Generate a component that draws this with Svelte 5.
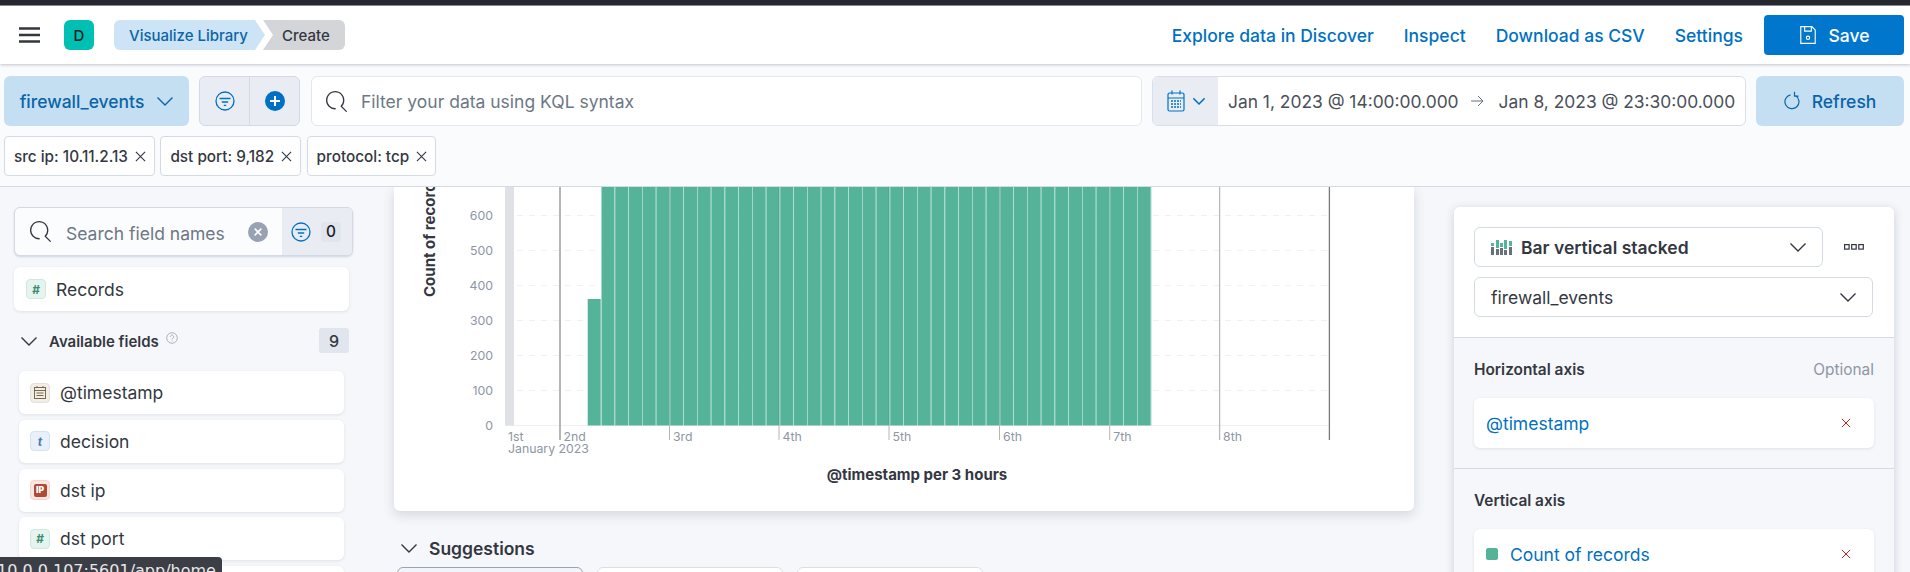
<script>
	const filters = ['src ip: 10.11.2.13', 'dst port: 9,182', 'protocol: tcp'];
	const fields = [
		{ name: '@timestamp', kind: 'date' },
		{ name: 'decision', kind: 'text' },
		{ name: 'dst ip', kind: 'ip' },
		{ name: 'dst port', kind: 'num' },
		{ name: 'protocol', kind: 'text' }
	];

	// chart coordinates are local to the card, which starts at x 394, y 187 and is scrolled
	const originX = 111; // plot left
	const dayWidth = 110;
	const baseY = 238.5;
	const yTicks = [0, 100, 200, 300, 400, 500, 600];
	const days = [
		{ label: '2nd', x: 166 },
		{ label: '3rd', x: 275.5 },
		{ label: '4th', x: 385 },
		{ label: '5th', x: 495 },
		{ label: '6th', x: 605.5 },
		{ label: '7th', x: 715.7 },
		{ label: '8th', x: 825.6 }
	];
	const bars = Array.from({ length: 40 }, (_, i) => 207.5 + (i * dayWidth) / 8);
	const gridLines = yTicks.slice(1).map((t) => baseY - (t / 100) * 35);
</script>

{#snippet chevron(size = 16)}
	<svg class="chev" width={size} height={size} viewBox="0 0 16 16" aria-hidden="true">
		<path d="M.5 4.5L8 12l7.5-7.5" fill="none" stroke="currentColor" stroke-width="1.4" />
	</svg>
{/snippet}

{#snippet cross(size = 12)}
	<svg width={size} height={size} viewBox="0 0 12 12" aria-hidden="true">
		<path d="M1 1l10 10M11 1L1 11" fill="none" stroke="currentColor" stroke-width="1.2" />
	</svg>
{/snippet}

{#snippet funnel(size = 20)}
	<svg width={size} height={size} viewBox="0 0 20 20" aria-hidden="true" fill="none" stroke="currentColor" stroke-width="1.3">
		<circle cx="10" cy="10" r="9" />
		<path d="M4.5 7.5h11M6.8 11h6.4M8.8 14.3h2.4" />
	</svg>
{/snippet}

{#snippet searchIcon()}
	<svg width="21" height="21" viewBox="0 0 16 16" aria-hidden="true">
		<path fill="#343741" d="M11.3 12l3.85 3.85a.5.5 0 00.7-.7l-3.56-3.57c2.38-2.74 2.27-6.92-.34-9.53-2.73-2.73-7.17-2.73-9.9 0-2.73 2.73-2.73 7.17 0 9.9A6.96 6.96 0 007 14a.5.5 0 000-1 5.96 5.96 0 01-4.24-1.76 6 6 0 010-8.48c2.34-2.34 6.14-2.34 8.48 0a6 6 0 010 8.48.5.5 0 00.06.76z" />
	</svg>
{/snippet}

<div class="page">
	<div class="chrome"></div>

	<header class="topnav">
		<button class="burger" aria-label="Menu">
			<svg width="21" height="16" viewBox="0 0 21 16" aria-hidden="true">
				<path d="M0 1.5h21M0 8h21M0 14.5h21" stroke="#343741" stroke-width="2.4" />
			</svg>
		</button>
		<span class="space-badge">D</span>
		<nav class="crumbs">
			<span class="crumb first">Visualize Library</span>
			<span class="crumb last">Create</span>
		</nav>
		<div class="links">
			<span>Explore data in Discover</span>
			<span>Inspect</span>
			<span>Download as CSV</span>
			<span>Settings</span>
		</div>
		<button class="save">
			<svg width="18" height="20" viewBox="0 0 16 18" aria-hidden="true" fill="none" stroke="#fff" stroke-width="1">
				<path d="M1.5 1.5h10l3 3v12h-13z" />
				<path d="M5 1.500v4h6v-4" />
				<circle cx="8" cy="11.500" r="1.500" />
			</svg>
			Save
		</button>
	</header>

	<section class="querybar">
		<div class="row">
			<button class="dataview">firewall_events {@render chevron(16)}</button>
			<div class="filter-group">
				<span class="fg-cell">{@render funnel(20)}</span>
				<span class="fg-cell">
					<svg width="20" height="20" viewBox="0 0 20 20" aria-hidden="true">
						<circle cx="10" cy="10" r="10" fill="#0071c2" />
						<path d="M10 5v10M5 10h10" stroke="#fff" stroke-width="2" />
					</svg>
				</span>
			</div>
			<div class="kql">
				{@render searchIcon()}
				<span>Filter your data using KQL syntax</span>
			</div>
			<div class="datepicker">
				<span class="dp-prepend">
					<svg width="18" height="22" viewBox="0 0 18 22" aria-hidden="true" fill="none" stroke="#0071c2" stroke-width="1.2">
						<rect x="1" y="3" width="16" height="18" rx="1.500" />
						<path d="M1 8h16M5 0.500v4M13 0.500v4" />
						<path d="M4 11h10M4 14h10M4 17h10" stroke-dasharray="2 1" stroke-width="1.600" />
					</svg>
					{@render chevron(12)}
				</span>
				<span class="dp-text">Jan 1, 2023 @ 14:00:00.000</span>
				<svg class="dp-arrow" width="14" height="14" viewBox="0 0 14 14" aria-hidden="true">
					<path d="M1 7h12M8 2l5 5-5 5" fill="none" stroke="#69707d" stroke-width="1" />
				</svg>
				<span class="dp-text">Jan 8, 2023 @ 23:30:00.000</span>
			</div>
			<button class="refresh">
				<svg width="16" height="20" viewBox="0 0 16 20" aria-hidden="true" fill="none" stroke="#0b64a8" stroke-width="1.200">
					<path d="M11.500 4.600a7 7 0 1 1-5-0.800M10.500 0.800v4.400h4" />
				</svg>
				Refresh
			</button>
		</div>
		<div class="row pills">
			{#each filters as f}
				<span class="pill">{f} <span class="pill-x">{@render cross(11)}</span></span>
			{/each}
		</div>
	</section>

	<div class="workspace">
		<aside class="sidebar">
			<div class="fieldsearch">
				<div class="fs-input">
					{@render searchIcon()}
					<span class="fs-placeholder">Search field names</span>
					<span class="fs-clear">
						<svg width="10" height="10" viewBox="0 0 12 12" aria-hidden="true">
							<path d="M2 2l8 8M10 2l-8 8" stroke="#fff" stroke-width="2" />
						</svg>
					</span>
				</div>
				<div class="fs-filter">
					<span class="fs-funnel">{@render funnel(20)}</span>
					<span class="fs-count">0</span>
				</div>
			</div>

			<div class="records">
				<span class="ftoken num">#</span>
				Records
			</div>

			<div class="avail">
				{@render chevron(16)}
				<strong>Available fields</strong>
				<svg class="help" width="12" height="12" viewBox="0 0 12 12" aria-hidden="true" fill="none" stroke="#98a2b3" stroke-width="0.800">
					<circle cx="6" cy="6" r="5.300" />
					<path d="M4.300 4.800a1.700 1.700 0 1 1 2.600 1.500c-.6.300-.9.600-.9 1.200M6 8.600v.8" />
				</svg>
				<span class="avail-count">9</span>
			</div>

			<ul class="fieldlist">
				{#each fields as field}
					<li>
						{#if field.kind === 'date'}
							<span class="ftoken date">
								<svg width="12" height="13" viewBox="0 0 12 13" aria-hidden="true" fill="none" stroke="#7a6a4d" stroke-width="1">
									<rect x="0.500" y="1.500" width="11" height="11" />
									<path d="M0.500 4.500h11M3 0v2M9 0v2M2.500 7h7M2.500 9.500h7" />
								</svg>
							</span>
						{:else if field.kind === 'text'}
							<span class="ftoken text">t</span>
						{:else if field.kind === 'ip'}
							<span class="ftoken ip"><b>IP</b></span>
						{:else}
							<span class="ftoken num">#</span>
						{/if}
						{field.name}
					</li>
				{/each}
			</ul>
		</aside>

		<main class="center">
			<div class="chartcard">
				<svg class="chart" width="1020" height="324" viewBox="0 0 1020 324" role="img" aria-label="Count of records per 3 hours">
					<text class="axis-title" transform="translate(41 110) rotate(-90)">Count of records</text>

					{#each yTicks as t}
						<text class="tick" x="99" y={baseY - (t / 100) * 35 + 4.500} text-anchor="end">{t}</text>
					{/each}

					{#each gridLines as y}
						<line x1={originX} x2="935" y1={y} y2={y} stroke="#f0f1f4" stroke-dasharray="6 6" />
					{/each}
					<line x1={originX} x2="935" y1={baseY} y2={baseY} stroke="#eef0f3" />

					<rect x={originX} y="0" width="9" height={baseY} fill="#dfe1e6" />
					<rect x="193.700" y="112" width="13" height={baseY - 112} fill="#54b399" />
					{#each bars as x}
						<rect x={x} y="0" width="13" height={baseY} fill="#54b399" />
						<rect x={x + 13} y="0" width="0.750" height={baseY} fill="#a5d8c9" />
					{/each}

					<line x1="166" x2="166" y1="0" y2="253" stroke="#b5b5b5" stroke-width="2" />
					{#each days.slice(1, 6) as d}
						<line x1={d.x} x2={d.x} y1="0" y2={baseY} stroke="#000" stroke-opacity="0.120" />
					{/each}
					{#each days.slice(1, 6) as d}
						<line x1={d.x} x2={d.x} y1={baseY} y2="253" stroke="#b5b5b5" />
					{/each}
					<line x1="825.600" x2="825.600" y1="0" y2="253" stroke="#b8b8b8" stroke-width="1.300" />
					<line x1="935.400" x2="935.400" y1="0" y2="253" stroke="#7a7a7a" stroke-width="1.300" />

					<text class="tick" x="114" y="253.500">1st</text>
					{#each days as d}
						<text class="tick" x={d.x + 3.500} y="253.500">{d.label}</text>
					{/each}
					<text class="tick" x="114" y="266">January 2023</text>

					<text class="axis-title" x="523" y="293" text-anchor="middle">@timestamp per 3 hours</text>
				</svg>
			</div>

			<div class="suggest-head">
				{@render chevron(16)}
				<h2>Suggestions</h2>
			</div>
			<div class="suggest-row">
				<div class="suggest on"></div>
				<div class="suggest"></div>
				<div class="suggest"></div>
			</div>
		</main>

		<aside class="config">
			<div class="config-top">
				<div class="select-row">
					<div class="select type">
						<svg width="21" height="15" viewBox="0 0 21 15" aria-hidden="true">
							<g fill="#69707d">
								<rect x="0" y="7" width="3" height="8" /><rect x="5" y="9" width="3" height="6" />
								<rect x="9" y="8" width="3" height="7" /><rect x="13" y="10" width="3" height="5" />
								<rect x="18" y="7" width="3" height="8" />
							</g>
							<g fill="#54b399">
								<rect x="0" y="3" width="3" height="3" /><rect x="5" y="0" width="3" height="8" />
								<rect x="9" y="3" width="3" height="4" /><rect x="13" y="0" width="3" height="9" />
								<rect x="18" y="1" width="3" height="5" />
							</g>
						</svg>
						<strong>Bar vertical stacked</strong>
						{@render chevron(16)}
					</div>
					<svg class="more" width="20" height="6" viewBox="0 0 20 6" aria-label="Options" fill="none" stroke="#343741" stroke-width="1.200">
						<rect x="0.600" y="0.600" width="4.500" height="4.500" />
						<rect x="7.700" y="0.600" width="4.500" height="4.500" />
						<rect x="14.800" y="0.600" width="4.500" height="4.500" />
					</svg>
				</div>
				<div class="select">
					<span>firewall_events</span>
					{@render chevron(16)}
				</div>
			</div>

			<section class="dim">
				<div class="dim-head"><strong>Horizontal axis</strong><span>Optional</span></div>
				<div class="dim-card">
					<span class="dim-name">@timestamp</span>
					<span class="dim-x">{@render cross(10)}</span>
				</div>
			</section>

			<section class="dim">
				<div class="dim-head"><strong>Vertical axis</strong></div>
				<div class="dim-card">
					<i class="swatch"></i>
					<span class="dim-name">Count of records</span>
					<span class="dim-x">{@render cross(10)}</span>
				</div>
			</section>
		</aside>
	</div>

	<div class="statusbar">10.0.0.107:5601/app/home</div>
</div>

<style>
	:global(body) {
		background: #f5f7fa;
	}

	.page {
		position: relative;
		height: 572px;
		overflow: hidden;
		font-family: Inter, 'Noto Sans', sans-serif;
		color: #343741;
		font-size: 17.5px;
	}

	button {
		font: inherit;
		border: 0;
		padding: 0;
		background: none;
		color: inherit;
	}

	.chrome {
		height: 5px;
		background: #25282f;
		border-bottom: 1px solid #8a8d93;
	}

	.topnav {
		position: relative;
		z-index: 2;
		height: 58px;
		display: flex;
		align-items: center;
		background: #fff;
		box-shadow: 0 1px 3px rgba(60, 70, 100, 0.3);
		padding: 0 6px 0 19px;
	}

	.burger {
		display: flex;
		width: 21px;
		margin-right: 24px;
	}

	.space-badge {
		width: 30px;
		height: 30px;
		border-radius: 6px;
		background: #00bfb3;
		display: flex;
		align-items: center;
		justify-content: center;
		font-size: 15px;
		font-weight: 500;
		color: #1a1c21;
		margin-right: 20px;
	}

	.crumbs {
		display: flex;
		font-size: 15px;
		font-weight: 500;
	}

	.crumb {
		height: 30px;
		display: flex;
		align-items: center;
	}

	.crumb.first {
		width: 151px;
		padding-left: 15px;
		box-sizing: border-box;
		background: #cce4f5;
		color: #0b64a8;
		border-radius: 6px 0 0 6px;
		clip-path: polygon(0 0, calc(100% - 10px) 0, 100% 50%, calc(100% - 10px) 100%, 0 100%);
	}

	.crumb.last {
		width: 82px;
		margin-left: -2px;
		padding-left: 19px;
		box-sizing: border-box;
		background: #d3d5d8;
		color: #343741;
		border-radius: 0 6px 6px 0;
		clip-path: polygon(0 0, 100% 0, 100% 100%, 0 100%, 10px 50%);
	}

	.links {
		margin-left: auto;
		display: flex;
		gap: 30px;
		color: #0071c2;
		font-weight: 500;
	}

	.save {
		margin-left: 21px;
		width: 140px;
		height: 40px;
		border-radius: 4px;
		background: #0077cc;
		color: #fff;
		font-weight: 500;
		display: flex;
		align-items: center;
		justify-content: center;
		gap: 12px;
	}

	.querybar {
		height: 123px;
		box-sizing: border-box;
		padding: 12px 6px 0 4px;
		background: #fafbfd;
		border-bottom: 1px solid #d3dae6;
		display: flex;
		flex-direction: column;
		gap: 10px;
	}

	.row {
		display: flex;
		gap: 10px;
		height: 50px;
		flex: none;
	}

	.row.pills {
		height: 40px;
		gap: 5.500px;
	}

	.dataview {
		width: 185px;
		border-radius: 6px;
		background: #c4dff2;
		color: #0b64a8;
		font-weight: 500;
		display: flex;
		align-items: center;
		justify-content: center;
		gap: 13px;
	}

	.filter-group {
		width: 101px;
		box-sizing: border-box;
		display: flex;
		background: #e9edf3;
		border: 1px solid #d3dae6;
		border-radius: 6px;
	}

	.fg-cell {
		flex: 1;
		display: flex;
		align-items: center;
		justify-content: center;
		color: #0071c2;
	}

	.fg-cell + .fg-cell {
		border-left: 1px solid #d3dae6;
	}

	.kql {
		flex: 1;
		display: flex;
		align-items: center;
		gap: 14px;
		padding-left: 14px;
		margin-left: 1px;
		background: #fff;
		border: 1px solid #e3e7ee;
		border-radius: 6px;
		color: #6d7785;
	}

	.datepicker {
		width: 594px;
		flex: none;
		box-sizing: border-box;
		display: flex;
		align-items: center;
		background: #fff;
		border: 1px solid #d9dfe9;
		border-radius: 6px;
		overflow: hidden;
		color: #4a4f59;
		white-space: nowrap;
		font-size: 17.4px;
	}

	.dp-prepend {
		align-self: stretch;
		width: 65px;
		flex: none;
		display: flex;
		align-items: center;
		justify-content: center;
		gap: 8px;
		background: #e9edf3;
		color: #0071c2;
		margin-right: 10px;
	}

	.dp-prepend .chev path {
		stroke-width: 2;
	}

	.dp-arrow {
		margin: 0 15px 0 11px;
		flex: none;
	}

	.refresh {
		width: 148px;
		flex: none;
		border-radius: 6px;
		background: #c4dff2;
		color: #0b64a8;
		font-weight: 500;
		display: flex;
		align-items: center;
		justify-content: center;
		gap: 12px;
	}

	.pill {
		height: 40px;
		box-sizing: border-box;
		padding: 0 8px 0 9px;
		display: flex;
		align-items: center;
		gap: 7px;
		background: #fff;
		border: 1px solid #d3dae6;
		border-radius: 4px;
		font-size: 15.3px;
		font-weight: 500;
		white-space: nowrap;
	}

	.pill-x {
		display: flex;
	}

	.workspace {
		height: 385px;
		display: flex;
		overflow: hidden;
	}

	.sidebar {
		width: 394px;
		flex: none;
		box-sizing: border-box;
		padding: 20px 0 0 14px;
	}

	.fieldsearch {
		width: 339px;
		height: 49px;
		box-sizing: border-box;
		display: flex;
		border: 1px solid #d3dae6;
		border-radius: 6px;
		overflow: hidden;
		background: #fbfcfd;
		box-shadow: 0 1px 2px rgba(90, 120, 170, 0.25);
	}

	.fs-input {
		flex: 1;
		display: flex;
		align-items: center;
		padding-left: 15px;
		gap: 15px;
		white-space: nowrap;
	}

	.fs-placeholder {
		color: #6d7785;
		padding-top: 3px;
	}

	.fs-clear {
		width: 20px;
		height: 20px;
		border-radius: 50%;
		background: #98a2b3;
		margin-left: auto;
		margin-right: 14px;
		display: flex;
		align-items: center;
		justify-content: center;
	}

	.fs-filter {
		width: 70px;
		flex: none;
		background: #e9edf3;
		display: flex;
		align-items: center;
		padding-left: 9px;
		box-sizing: border-box;
		gap: 10px;
	}

	.fs-funnel {
		display: flex;
		color: #0071c2;
	}

	.fs-count {
		width: 20px;
		height: 20px;
		border-radius: 3px;
		background: #e0e5ee;
		display: flex;
		align-items: center;
		justify-content: center;
		font-size: 15.4px;
		font-weight: 500;
		color: #1a1c21;
	}

	.records {
		width: 335px;
		height: 44px;
		margin-top: 11px;
		display: flex;
		align-items: center;
		gap: 10px;
		padding-left: 12px;
		box-sizing: border-box;
		background: #fff;
		border-radius: 6px;
		box-shadow: 0 1px 3px rgba(90, 105, 130, 0.15);
	}

	.ftoken {
		width: 20px;
		height: 20px;
		flex: none;
		box-sizing: border-box;
		border-radius: 4px;
		display: flex;
		align-items: center;
		justify-content: center;
		font-size: 12px;
		font-weight: 700;
		font-style: italic;
	}

	.ftoken.num {
		background: #e6f4f0;
		border: 1px solid #cfe9e1;
		color: #3f8a74;
	}

	.ftoken.text {
		background: #e8f1f9;
		border: 1px solid #d2e3f2;
		color: #4a7eac;
	}

	.ftoken.date {
		background: #f1eee7;
		border: 1px solid #e6e1d6;
	}

	.ftoken.ip {
		background: #fbe6e1;
		border: 1px solid #f6d3cb;
	}

	.ftoken.ip b {
		width: 13px;
		height: 13px;
		display: flex;
		align-items: center;
		justify-content: center;
		font-size: 8.500px;
		font-style: normal;
		background: #ae4a37;
		color: #fff;
		border-radius: 2px;
	}

	.avail {
		width: 335px;
		height: 25px;
		margin-top: 17px;
		display: flex;
		align-items: center;
		padding-left: 7px;
		box-sizing: border-box;
		font-size: 15px;
	}

	.avail strong {
		margin-left: 12px;
		padding-top: 2px;
		font-weight: 600;
	}

	.help {
		margin: 0 0 5px 7px;
	}

	.avail-count {
		margin-left: auto;
		width: 30px;
		height: 25px;
		border-radius: 3px;
		background: #e0e5ee;
		display: flex;
		align-items: center;
		justify-content: center;
		font-weight: 500;
		font-size: 16px;
	}

	.fieldlist {
		list-style: none;
		margin: 18px 0 0 5px;
		padding: 0;
		width: 325px;
		display: flex;
		flex-direction: column;
		gap: 5.750px;
	}

	.fieldlist li {
		height: 43px;
		flex: none;
		display: flex;
		align-items: center;
		gap: 10px;
		padding-left: 11px;
		background: #fff;
		border-radius: 6px;
		box-shadow: 0 1px 3px rgba(90, 105, 130, 0.15);
	}

	.center {
		width: 1020px;
		flex: none;
	}

	.chartcard {
		height: 324px;
		background: #fff;
		border-radius: 0 0 6px 6px;
		box-shadow: 0 4px 12px rgba(60, 70, 100, 0.18);
	}

	.chart {
		display: block;
	}

	.tick {
		font-size: 12.3px;
		fill: #8d96a5;
	}

	.axis-title {
		font-size: 15px;
		font-weight: 700;
		fill: #343741;
	}

	.suggest-head {
		display: flex;
		align-items: center;
		gap: 12px;
		margin: 26px 0 0 7px;
		height: 22px;
	}

	.suggest-head h2 {
		margin: 0;
		font-size: 17.500px;
		font-weight: 600;
	}

	.suggest-row {
		display: flex;
		gap: 14px;
		margin: 8px 0 0 3px;
	}

	.suggest {
		width: 186px;
		height: 40px;
		flex: none;
		background: #fff;
		border: 1px solid #d9dfe9;
		border-radius: 6px;
		box-sizing: border-box;
	}

	.suggest.on {
		border-color: #9aa3b2;
		background: #f1f4f8;
	}

	.config {
		width: 440px;
		flex: none;
		margin: 20px 0 0 40px;
		background: #f5f7fa;
		border-radius: 6px 6px 0 0;
		box-shadow: 0 2px 10px rgba(60, 70, 100, 0.22);
		align-self: flex-start;
	}

	.config-top {
		background: #fff;
		border-radius: 6px 6px 0 0;
		padding: 20px 20px 20px;
		height: 130px;
		box-sizing: border-box;
		display: flex;
		flex-direction: column;
		gap: 10px;
	}

	.select-row {
		display: flex;
		align-items: center;
		gap: 21px;
	}

	.select {
		height: 40px;
		box-sizing: border-box;
		display: flex;
		align-items: center;
		padding: 0 16px 0 16px;
		border: 1px solid #d3dae6;
		border-radius: 6px;
		background: #fff;
		width: 399px;
	}

	.select .chev {
		margin-left: auto;
	}

	.select.type {
		width: 349px;
		gap: 9px;
	}

	.select.type strong {
		font-weight: 600;
	}

	.dim {
		height: 131px;
		box-sizing: border-box;
		padding: 22px 20px 0;
		border-top: 1px solid #d3dae6;
	}

	.dim-head {
		display: flex;
		justify-content: space-between;
		font-size: 15.4px;
		line-height: 20px;
	}

	.dim-head strong {
		font-weight: 600;
	}

	.dim-head span {
		color: #8d96a5;
	}

	.dim-card {
		height: 50px;
		margin-top: 18px;
		display: flex;
		align-items: center;
		padding: 0 23px 0 12px;
		background: #fff;
		border-radius: 6px;
		box-shadow: 0 1px 3px rgba(90, 105, 130, 0.15);
	}

	.dim-name {
		color: #0071c2;
	}

	.swatch {
		width: 12px;
		height: 12px;
		border-radius: 2px;
		background: #54b399;
		margin-right: 12px;
	}

	.dim-x {
		margin-left: auto;
		display: flex;
		color: #bd271e;
	}

	.statusbar {
		position: absolute;
		left: 0;
		bottom: 0;
		width: 222px;
		height: 15px;
		box-sizing: border-box;
		overflow: hidden;
		background: #3c3e45;
		color: #e8e8e8;
		border-radius: 0 4px 0 0;
		font-family: 'DejaVu Sans', sans-serif;
		font-size: 16px;
		line-height: 28px;
		text-indent: -3px;
		white-space: nowrap;
	}
</style>
